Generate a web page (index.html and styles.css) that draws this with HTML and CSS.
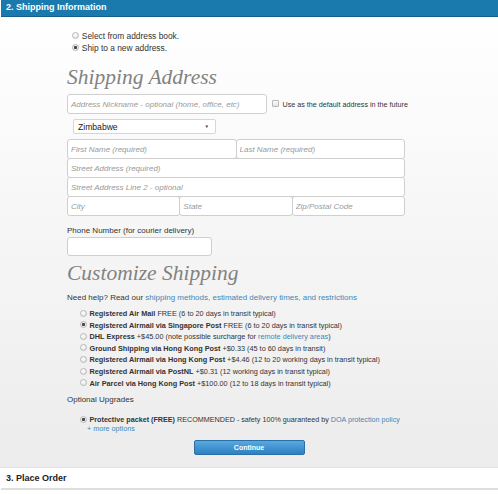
FILE: index.html
```html
<!doctype html>
<html lang="en">

<head>
  <meta charset="utf-8" />
  <meta name="viewport" content="width=device-width, initial-scale=1">
  <title>Checkout - Shipping</title>
  <link rel="stylesheet" href="styles.css">
</head>

<body>
  <div class="step-head">2. Shipping Information</div>

  <div class="panel">
    <div class="address-choice">
      <label class="opt"><input type="radio" name="addr"> Select from address book.</label>
      <label class="opt"><input type="radio" name="addr" checked> Ship to a new address.</label>
    </div>

    <h2 class="serif-title title-address">Shipping Address</h2>

    <div class="nick-row">
      <input class="field nick" placeholder="Address Nickname - optional (home, office, etc)">
      <label class="opt"><input type="checkbox"> Use as the default address in the future</label>
    </div>

    <div class="country">
      <span>Zimbabwe</span>
      <span class="caret">&#9660;</span>
    </div>

    <div class="field-group">
      <div class="field-row">
        <input placeholder="First Name (required)">
        <input placeholder="Last Name (required)">
      </div>
      <div class="field-row">
        <input placeholder="Street Address (required)">
      </div>
      <div class="field-row">
        <input placeholder="Street Address Line 2 - optional">
      </div>
      <div class="field-row">
        <input placeholder="City">
        <input placeholder="State">
        <input placeholder="Zip/Postal Code">
      </div>
    </div>

    <div class="phone-label">Phone Number (for courier delivery)</div>
    <input class="field phone">

    <h2 class="serif-title title-customize">Customize Shipping</h2>

    <p class="help">Need help? Read our <a href="#">shipping methods, estimated delivery times, and restrictions</a></p>

    <div class="methods">
      <label class="opt"><input type="radio" name="ship"> <b>Registered Air Mail</b> FREE (6 to 20 days in transit typical)</label>
      <label class="opt"><input type="radio" name="ship" checked> <b>Registered Airmail via Singapore Post</b> FREE (6 to 20 days in transit typical)</label>
      <label class="opt"><input type="radio" name="ship"> <b>DHL Express</b> +$45.00 (note possible surcharge for <a href="#">remote delivery areas</a>)</label>
      <label class="opt"><input type="radio" name="ship"> <b>Ground Shipping via Hong Kong Post</b> +$0.33 (45 to 60 days in transit)</label>
      <label class="opt"><input type="radio" name="ship"> <b>Registered Airmail via Hong Kong Post</b> +$4.46 (12 to 20 working days in transit typical)</label>
      <label class="opt"><input type="radio" name="ship"> <b>Registered Airmail via PostNL</b> +$0.31 (12 working days in transit typical)</label>
      <label class="opt"><input type="radio" name="ship"> <b>Air Parcel via Hong Kong Post</b> +$100.00 (12 to 18 days in transit typical)</label>
    </div>

    <div class="upgrades-label">Optional Upgrades</div>

    <div class="upgrades">
      <label class="opt"><input type="radio" name="up" checked> <b>Protective packet (FREE)</b> RECOMMENDED - safety 100% guaranteed by <a href="#">DOA protection policy</a></label>
      <a href="#" class="more">+ more options</a>
    </div>

    <div class="actions">
      <button class="continue">Continue</button>
    </div>
  </div>

  <div class="step-head closed">3. Place Order</div>
</body>

</html>
```

FILE: styles.css
```css
html,
body {
  margin: 0;
  background: #fff;
}

body {
  font-family: "Liberation Sans", Arial, sans-serif;
  font-size: 8px;
  color: #333;
}

a {
  color: #3f87b5;
  text-decoration: none;
}

.step-head {
  height: 16px;
  line-height: 15px;
  margin-left: 1px;
  padding-left: 5px;
  background: #1a7aae;
  border-bottom: 1px solid #125f88;
  color: #fff;
  font-size: 9px;
  font-weight: bold;
}

.step-head.closed {
  height: 20px;
  line-height: 20px;
  background: #fff;
  color: #222;
  border-bottom: 2px solid #dedede;
}

.panel {
  padding: 13px 0 12px 67px;
  background: linear-gradient(#fff, #ececec);
  border-bottom: 1px solid #e2e2e2;
}

/* radios and checkboxes */
.opt {
  display: block;
  white-space: nowrap;
}

.opt input {
  appearance: none;
  -webkit-appearance: none;
  display: inline-block;
  vertical-align: middle;
  position: relative;
  top: -1px;
  width: 7px;
  height: 7px;
  margin: 0 0.5px 0 0;
  border: 1px solid #b8b8b8;
  border-radius: 50%;
  background: radial-gradient(circle at 40% 35%, #fff, #dcdcdc);
  box-sizing: border-box;
}

.opt input[type="checkbox"] {
  margin-right: 1.5px;
  border-radius: 1px;
  background: linear-gradient(#fdfdfd, #e4e4e4);
}

.opt input:checked {
  background: radial-gradient(circle, #444 0 1.3px, #f2f2f2 1.8px, #dcdcdc);
}

.address-choice {
  margin-left: 5px;
  font-size: 8.4px;
}

.address-choice .opt {
  height: 12px;
  line-height: 12px;
}

.serif-title {
  margin: 0;
  font-family: "Liberation Serif", "Times New Roman", serif;
  font-style: italic;
  font-weight: normal;
  font-size: 21.5px;
  line-height: 26px;
  color: #828282;
}

.title-address {
  margin-top: 10px;
}

.title-customize {
  margin-top: 4px;
}

/* inputs */
.field,
.field-row input {
  box-sizing: border-box;
  border: 1px solid #cfcfcf;
  border-radius: 3px;
  background: #fff;
  padding: 0 3px;
  font-family: "Liberation Sans", Arial, sans-serif;
  font-size: 8px;
  color: #333;
  outline: none;
}

::placeholder {
  color: #9a9a9a;
  font-style: italic;
}

.nick-row {
  display: flex;
  align-items: center;
  gap: 5px;
  margin-top: 4px;
  font-size: 7.2px;
}

.nick {
  width: 200px;
  height: 20px;
}

.country {
  display: flex;
  justify-content: space-between;
  align-items: center;
  box-sizing: border-box;
  width: 143px;
  height: 15px;
  margin: 5px 0 0 6px;
  padding: 0 6px 0 4px;
  border: 1px solid #d6d6d6;
  border-radius: 2px;
  background: #fff;
  font-size: 8.6px;
  color: #222;
}

.caret {
  font-size: 4.5px;
  color: #333;
}

.field-group {
  display: flex;
  flex-direction: column;
  width: 338px;
  margin-top: 5px;
}

.field-row {
  display: flex;
}

.field-row input {
  flex: 1;
  min-width: 0;
  height: 20px;
  margin-top: -1px;
}

.field-row:first-child input {
  margin-top: 0;
}

.field-row input + input {
  margin-left: -1px;
}

.phone-label {
  margin-top: 10px;
  line-height: 10px;
}

.phone {
  display: block;
  width: 145px;
  height: 19px;
  margin-top: 1px;
}

.help {
  margin: 7px 0 0;
  line-height: 10px;
}

.methods {
  margin: 5px 0 0 13px;
  font-size: 7.3px;
}

.methods .opt {
  height: 11.6px;
  line-height: 11.6px;
}

.upgrades-label {
  margin-top: 6px;
  line-height: 10px;
}

.upgrades {
  margin: 10px 0 0 13px;
  font-size: 7.2px;
  line-height: 9px;
}

.upgrades .opt {
  height: 9px;
}

.more {
  display: block;
  margin-left: 7px;
}

.actions {
  display: flex;
  justify-content: center;
  margin: 7px 0 0 -67px;
}

.continue {
  width: 111px;
  height: 15px;
  padding: 0;
  border: 1px solid #2c6fa6;
  border-radius: 2px;
  background: linear-gradient(#57a9de, #2d80c2);
  color: #fff;
  font-family: "Liberation Sans", Arial, sans-serif;
  font-size: 7px;
  font-weight: bold;
}
```
